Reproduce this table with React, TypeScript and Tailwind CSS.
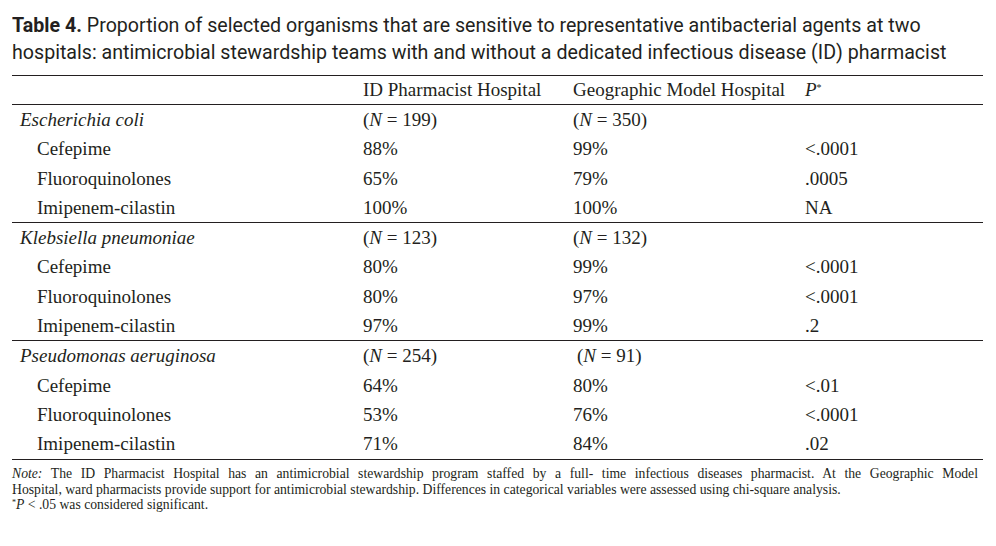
const ink = "text-[#231f20]";

type Row = { name: string; a: string; b: string; p: string };
type Group = { organism: string; na: string; nb: string; rows: Row[]; shiftB?: boolean };

const groups: Group[] = [
  {
    organism: "Escherichia coli",
    na: "199",
    nb: "350",
    rows: [
      { name: "Cefepime", a: "88%", b: "99%", p: "<.0001" },
      { name: "Fluoroquinolones", a: "65%", b: "79%", p: ".0005" },
      { name: "Imipenem-cilastin", a: "100%", b: "100%", p: "NA" },
    ],
  },
  {
    organism: "Klebsiella pneumoniae",
    na: "123",
    nb: "132",
    rows: [
      { name: "Cefepime", a: "80%", b: "99%", p: "<.0001" },
      { name: "Fluoroquinolones", a: "80%", b: "97%", p: "<.0001" },
      { name: "Imipenem-cilastin", a: "97%", b: "99%", p: ".2" },
    ],
  },
  {
    organism: "Pseudomonas aeruginosa",
    na: "254",
    nb: "91",
    shiftB: true,
    rows: [
      { name: "Cefepime", a: "64%", b: "80%", p: "<.01" },
      { name: "Fluoroquinolones", a: "53%", b: "76%", p: "<.0001" },
      { name: "Imipenem-cilastin", a: "71%", b: "84%", p: ".02" },
    ],
  },
];

const cols = "grid grid-cols-[351px_210px_232px_1fr]";

function N({ n }: { n: string }) {
  return (
    <span>
      (<i>N</i> = {n})
    </span>
  );
}

export default function App() {
  return (
    <div className={`w-[996px] h-[546px] bg-white px-[12px] pt-[12px] ${ink}`}>
      {/* condensed title: Roboto squeezed horizontally */}
      <h1 className="font-['Roboto',sans-serif] text-[21px] leading-[27px] whitespace-nowrap origin-left scale-x-[0.935]">
        <div>
          <b>Table 4.</b> Proportion of selected organisms that are sensitive to representative antibacterial agents at two
        </div>
        <div>hospitals: antimicrobial stewardship teams with and without a dedicated infectious disease (ID) pharmacist</div>
      </h1>

      <div className="w-[971px] mt-[9px] font-['Liberation_Serif',serif] text-[19px]">
        <div className={`${cols} h-[30px] leading-[27px] border-y border-[#231f20]`}>
          <div />
          <div>ID Pharmacist Hospital</div>
          <div>Geographic Model Hospital</div>
          <div>
            <i>P</i>
            <sup className="text-[10px]">*</sup>
          </div>
        </div>

        {groups.map((g) => (
          <div key={g.organism} className="border-b border-[#231f20]">
            <div className={`${cols} h-[29.3px] leading-[29.3px]`}>
              <div className="pl-[8px] italic">{g.organism}</div>
              <div>
                <N n={g.na} />
              </div>
              <div className={g.shiftB ? "pl-[4px]" : ""}>
                <N n={g.nb} />
              </div>
              <div />
            </div>
            {g.rows.map((r) => (
              <div key={r.name} className={`${cols} h-[29.3px] leading-[29.3px]`}>
                <div className="pl-[25px]">{r.name}</div>
                <div>{r.a}</div>
                <div>{r.b}</div>
                <div>{r.p}</div>
              </div>
            ))}
          </div>
        ))}
      </div>

      <div className="w-[966px] mt-[6px] font-['Liberation_Serif',serif] text-[13.7px]">
        <p className="leading-[16px] text-justify">
          <span className="block [text-align-last:justify]">
            <i>Note:</i> The ID Pharmacist Hospital has an antimicrobial stewardship program staffed by a full- time
            infectious diseases pharmacist. At the Geographic Model
          </span>
          <span className="block">
            Hospital, ward pharmacists provide support for antimicrobial stewardship. Differences in categorical
            variables were assessed using chi-square analysis.
          </span>
        </p>
        <p className="leading-[15px] -mt-[1px]">
          <sup className="text-[8px]">*</sup>
          <i>P</i> &lt; .05 was considered significant.
        </p>
      </div>
    </div>
  );
}
